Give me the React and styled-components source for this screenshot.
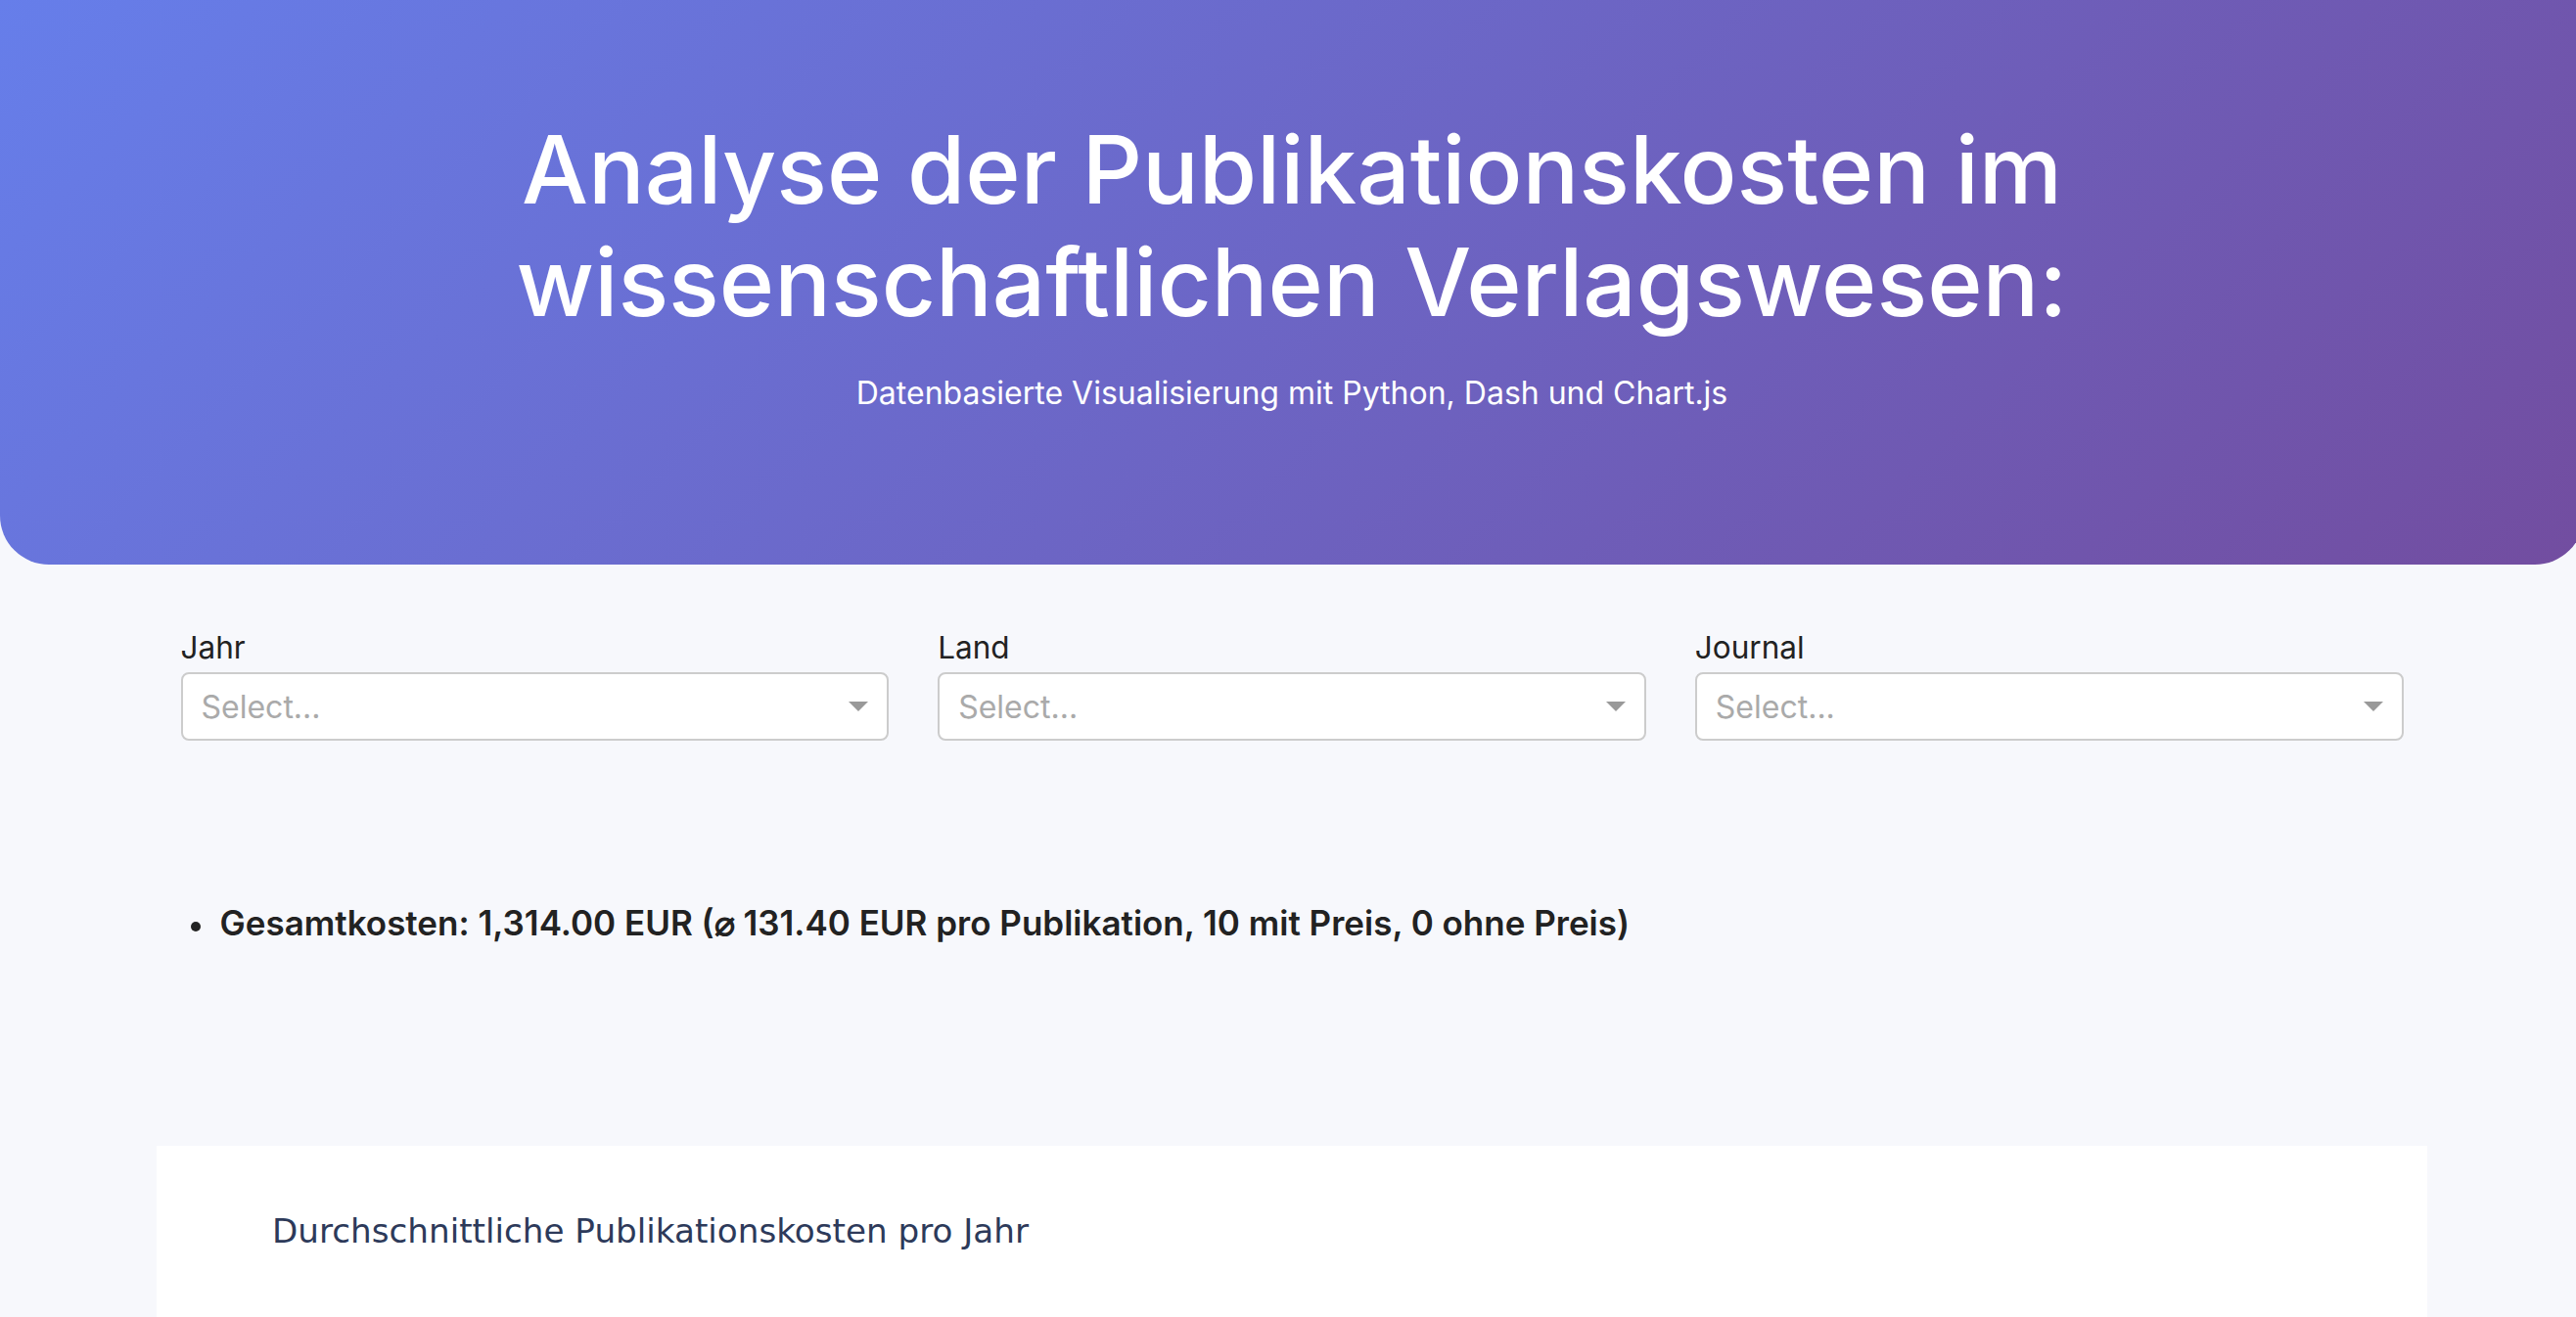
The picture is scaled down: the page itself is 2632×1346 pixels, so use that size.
import styled, { createGlobalStyle } from 'styled-components'

const GlobalStyle = createGlobalStyle`
  html, body {
    margin: 0;
    padding: 0;
    overflow-x: hidden;
    background: #F7F8FC;
    font-family: 'Inter', 'Liberation Sans', sans-serif;
  }
`

const Page = styled.div`
  width: 2640px;
  min-height: 1346px;
  background: #F7F8FC;
  display: flex;
  flex-direction: column;
  align-items: center;
`

const Header = styled.header`
  align-self: stretch;
  background: linear-gradient(135deg, #667EEA 0%, #724DA0 100%);
  color: #FFFFFF;
  padding: 116px 0 156px 0;
  border-bottom-left-radius: 50px;
  border-bottom-right-radius: 50px;
  display: flex;
  flex-direction: column;
  align-items: center;
  gap: 36px;
`

const Title = styled.h1`
  margin: 0;
  font-size: 96px;
  font-weight: 500;
  line-height: 1.2;
  text-align: center;
`

const Subtitle = styled.p`
  margin: 0;
  font-size: 32px;
  font-weight: 400;
  line-height: 39px;
`

const Filters = styled.div`
  width: 2271px;
  margin-top: 66px;
  display: grid;
  grid-template-columns: repeat(3, 1fr);
  gap: 50px;
`

const Field = styled.div`
  display: flex;
  flex-direction: column;
`

const Label = styled.label`
  font-size: 31.5px;
  line-height: 37px;
  color: #222222;
  margin-bottom: 7px;
`

const SelectBox = styled.div`
  height: 70px;
  box-sizing: border-box;
  background: #FFFFFF;
  border: 2px solid #CCCCCC;
  border-radius: 8px;
  padding: 0 19px 0 19px;
  display: flex;
  align-items: center;
  justify-content: space-between;
`

const Placeholder = styled.span`
  font-size: 32px;
  color: #AAAAAA;
`

const Arrow = styled.span`
  width: 0;
  height: 0;
  border-style: solid;
  border-width: 10px 10px 5px 10px;
  border-color: #999999 transparent transparent transparent;
  margin-top: 5px;
`

const Summary = styled.ul`
  width: 2271px;
  margin: 165px 0 0 0;
  padding: 0 0 0 36px;
  box-sizing: border-box;
  font-size: 35px;
  font-weight: 600;
  line-height: 42px;
  color: #222222;

  li::marker {
    font-size: 30px;
  }

  li {
    padding-left: 4px;
  }
`

const ChartCard = styled.section`
  width: 2320px;
  margin-top: 207px;
  background: #FFFFFF;
  padding: 67px 118px;
  box-sizing: border-box;
  min-height: 400px;
`

const ChartTitle = styled.h2`
  margin: 0;
  font-family: 'DejaVu Sans', sans-serif;
  font-size: 34.2px;
  font-weight: 400;
  line-height: 40px;
  color: #2D3A5A;
`

const filters = ['Jahr', 'Land', 'Journal']

const App = () => {
  return (
    <>
      <GlobalStyle />
      <Page>
        <Header>
          <Title>
            Analyse der Publikationskosten im
            <br />
            wissenschaftlichen Verlagswesen:
          </Title>
          <Subtitle>Datenbasierte Visualisierung mit Python, Dash und Chart.js</Subtitle>
        </Header>
        <Filters>
          {filters.map(name => (
            <Field key={name}>
              <Label>{name}</Label>
              <SelectBox>
                <Placeholder>Select...</Placeholder>
                <Arrow />
              </SelectBox>
            </Field>
          ))}
        </Filters>
        <Summary>
          <li>Gesamtkosten: 1,314.00 EUR (⌀ 131.40 EUR pro Publikation, 10 mit Preis, 0 ohne Preis)</li>
        </Summary>
        <ChartCard>
          <ChartTitle>Durchschnittliche Publikationskosten pro Jahr</ChartTitle>
        </ChartCard>
      </Page>
    </>
  )
}

export default App
